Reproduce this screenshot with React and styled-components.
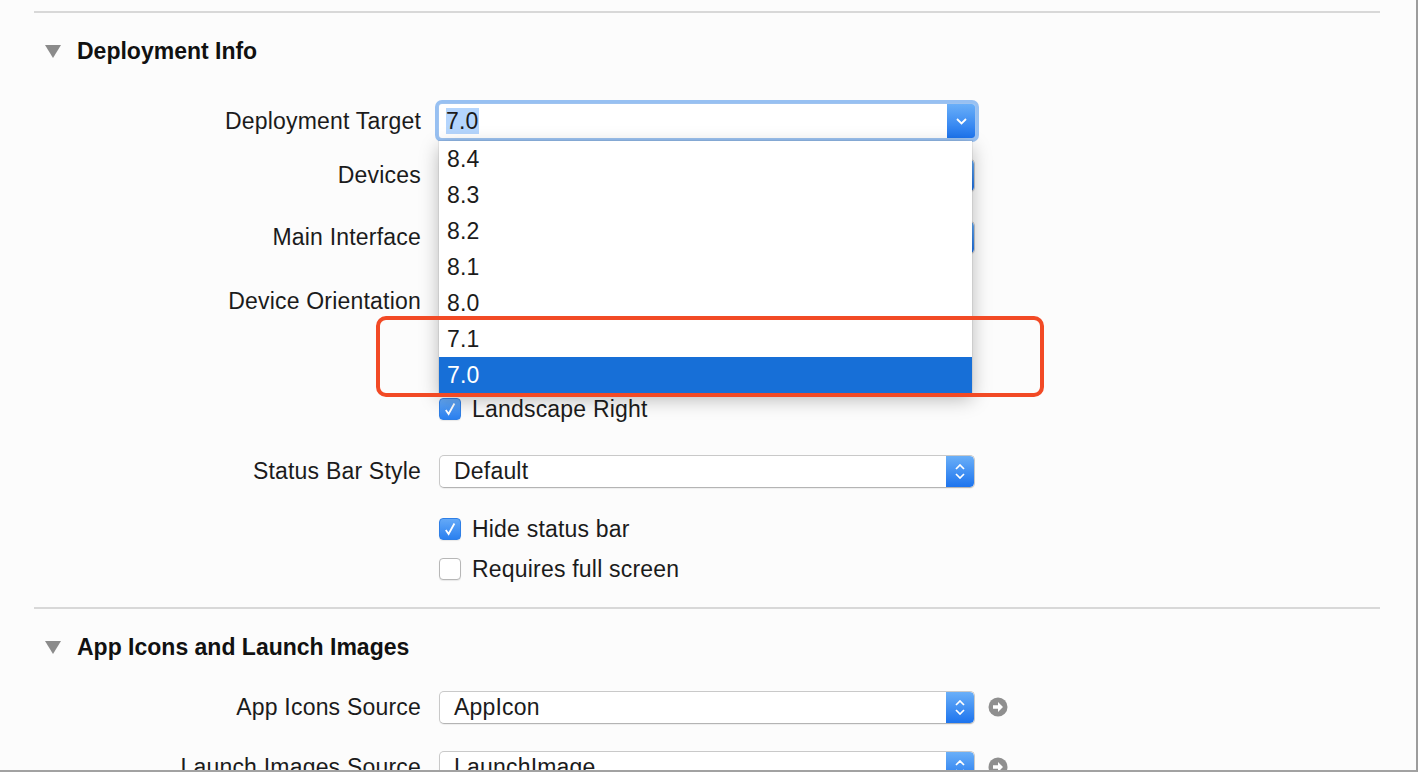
import React from "react";
import styled, { createGlobalStyle } from "styled-components";

const GlobalStyle = createGlobalStyle`
  html, body {
    margin: 0;
    padding: 0;
    background: #fcfcfc;
  }
  body {
    font-family: "Liberation Sans", Arial, sans-serif;
    color: #1b1b1b;
    overflow: hidden;
  }
`;

const Frame = styled.div`
  position: relative;
  width: 1416px;
  height: 770px;
  border-right: 2px solid #9c9c9c;
  border-bottom: 2px solid #a2a2a2;
  background: #fcfcfc;
  overflow: hidden;
`;

const Panel = styled.div`
  margin-left: 34px;
  width: 1346px;
  padding-top: 11px;
`;

const Section = styled.section`
  border-top: 2px solid #d8d8d8;
  padding-bottom: 20px;
`;

const Header = styled.div`
  display: flex;
  align-items: center;
  gap: 16px;
  height: 36px;
  margin-top: 20px;
  padding-left: 11px;
  font-size: 23px;
  font-weight: bold;
  color: #111;
`;

const Disclosure = styled.span`
  width: 0;
  height: 0;
  border-left: 8px solid transparent;
  border-right: 8px solid transparent;
  border-top: 13px solid #8b8b8b;
`;

const Row = styled.div`
  display: grid;
  grid-template-columns: 387px auto;
  column-gap: 18px;
  align-items: center;
  height: 36px;
  margin-top: ${(p) => p.$mt || 0}px;
  font-size: 23px;
  letter-spacing: 0.2px;
`;

const Label = styled.div`
  text-align: right;
  white-space: nowrap;
`;

const Control = styled.div`
  display: flex;
  align-items: center;
  gap: 13px;
  position: relative;
`;

const Combo = styled.div`
  position: relative;
  display: flex;
  align-items: center;
  flex-shrink: 0;
  width: 536px;
  height: 34px;
  box-sizing: border-box;
  background: #fff;
  border-radius: 3px;
  box-shadow: 0 0 0 1px #9fc3ef, 0 0 0 4px #97c0f2;
`;

const ComboText = styled.span`
  flex: 1;
  padding-left: 7px;
  line-height: 30px;
`;

const Selected = styled.span`
  background: #b4d5fd;
`;

const Popup = styled.div`
  display: flex;
  align-items: center;
  flex-shrink: 0;
  width: 536px;
  height: 33px;
  box-sizing: border-box;
  background: #fff;
  border: 1px solid #c9c9c9;
  border-bottom-color: #b4b4b4;
  border-radius: 5px;
  box-shadow: 0 1px 1px rgba(0, 0, 0, 0.06);
  overflow: hidden;
`;

const PopupText = styled.span`
  flex: 1;
  padding-left: 14px;
`;

const BlueButton = styled.span`
  display: flex;
  flex-direction: column;
  align-items: center;
  justify-content: center;
  gap: 3px;
  align-self: stretch;
  width: 28px;
  background: linear-gradient(#6aaff8, #1d74ee);
  border-radius: ${(p) => (p.$combo ? "0 3px 3px 0" : "0 4px 4px 0")};
`;

const Menu = styled.div`
  position: absolute;
  top: 37px;
  left: 0;
  z-index: 5;
  width: 533px;
  background: #fff;
  box-shadow: 0 6px 18px rgba(0, 0, 0, 0.28), 0 0 0 1px rgba(0, 0, 0, 0.06);
`;

const MenuItem = styled.div`
  height: 36px;
  line-height: 36px;
  padding-left: 8px;
  font-size: 23px;
  color: ${(p) => (p.$active ? "#fff" : "#1b1b1b")};
  background: ${(p) => (p.$active ? "#176fd7" : "transparent")};
`;

const CheckRow = styled.label`
  display: flex;
  align-items: center;
  gap: 11px;
`;

const Box = styled.span`
  display: flex;
  align-items: center;
  justify-content: center;
  width: 22px;
  height: 22px;
  box-sizing: border-box;
  border-radius: 4px;
  background: ${(p) => (p.$on ? "linear-gradient(#64a9f7, #2a80f0)" : "#fff")};
  border: 1px solid ${(p) => (p.$on ? "#2f7fe6" : "#b7b7b7")};
  box-shadow: 0 1px 1px rgba(0, 0, 0, 0.08);
`;

const Highlight = styled.div`
  position: absolute;
  left: 376px;
  top: 316px;
  width: 668px;
  height: 81px;
  box-sizing: border-box;
  border: 4px solid #f24a25;
  border-radius: 10px;
  z-index: 6;
`;

const ChevronDown = () => (
  <svg width="11" height="7" viewBox="0 0 11 7">
    <polyline points="1,1 5.5,5.5 10,1" fill="none" stroke="#fff" strokeWidth="1.8" />
  </svg>
);

const UpDown = () => (
  <>
    <svg width="10" height="6" viewBox="0 0 10 6">
      <polyline points="1,5 5,1 9,5" fill="none" stroke="#fff" strokeWidth="1.7" />
    </svg>
    <svg width="10" height="6" viewBox="0 0 10 6">
      <polyline points="1,1 5,5 9,1" fill="none" stroke="#fff" strokeWidth="1.7" />
    </svg>
  </>
);

const GoArrow = () => (
  <svg width="20" height="20" viewBox="0 0 20 20">
    <circle cx="10" cy="10" r="9.5" fill="#8f8f8f" />
    <polygon points="5,8.2 10,8.2 10,5 15,10 10,15 10,11.8 5,11.8" fill="#fff" />
  </svg>
);

const Check = ({ on, children }) => (
  <CheckRow>
    <Box $on={on}>
      {on && (
        <svg width="12" height="14" viewBox="0 0 12 14">
          <polyline points="1.8,8 4.6,12 10.4,1.5" fill="none" stroke="#fff" strokeWidth="1.8" />
        </svg>
      )}
    </Box>
    {children}
  </CheckRow>
);

const Select = ({ value, link }) => (
  <Control>
    <Popup>
      <PopupText>{value}</PopupText>
      <BlueButton>
        <UpDown />
      </BlueButton>
    </Popup>
    {link && <GoArrow />}
  </Control>
);

const versions = ["8.4", "8.3", "8.2", "8.1", "8.0", "7.1", "7.0"];

export default function App() {
  return (
    <Frame>
      <GlobalStyle />
      <Panel>
        <Section>
          <Header>
            <Disclosure />
            Deployment Info
          </Header>
          <Row $mt={34}>
            <Label>Deployment Target</Label>
            <Control>
              <Combo>
                <ComboText>
                  <Selected>7.0</Selected>
                </ComboText>
                <BlueButton $combo>
                  <ChevronDown />
                </BlueButton>
              </Combo>
              <Menu>
                {versions.map((v) => (
                  <MenuItem key={v} $active={v === "7.0"}>
                    {v}
                  </MenuItem>
                ))}
              </Menu>
            </Control>
          </Row>
          {/* these controls sit under the open menu, so their text is not shown */}
          <Row $mt={18}>
            <Label>Devices</Label>
            <Select value="" />
          </Row>
          <Row $mt={26}>
            <Label>Main Interface</Label>
            <Select value="" />
          </Row>
          <Row $mt={28}>
            <Label>Device Orientation</Label>
            <Check on />
          </Row>
          <Row>
            <span />
            <Check />
          </Row>
          <Row>
            <span />
            <Check on />
          </Row>
          <Row>
            <span />
            <Check on>Landscape Right</Check>
          </Row>
          <Row $mt={26}>
            <Label>Status Bar Style</Label>
            <Select value="Default" />
          </Row>
          <Row $mt={22}>
            <span />
            <Check on>Hide status bar</Check>
          </Row>
          <Row $mt={4}>
            <span />
            <Check>Requires full screen</Check>
          </Row>
        </Section>
        <Section>
          <Header>
            <Disclosure />
            App Icons and Launch Images
          </Header>
          <Row $mt={24}>
            <Label>App Icons Source</Label>
            <Select value="AppIcon" link />
          </Row>
          <Row $mt={24}>
            <Label>Launch Images Source</Label>
            <Select value="LaunchImage" link />
          </Row>
        </Section>
      </Panel>
      <Highlight />
    </Frame>
  );
}
